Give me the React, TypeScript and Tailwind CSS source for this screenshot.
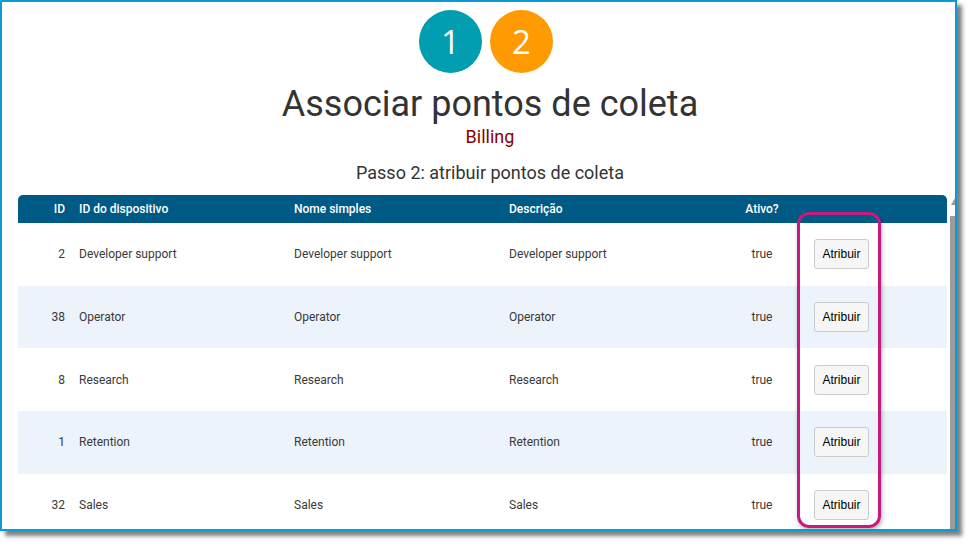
import React from "react";

const rows = [
  { id: 2, name: "Developer support" },
  { id: 38, name: "Operator" },
  { id: 8, name: "Research" },
  { id: 1, name: "Retention" },
  { id: 32, name: "Sales" },
];

export default function App() {
  return (
    <div className="w-[971px] h-[546px] bg-white relative" style={{ fontFamily: "Roboto, 'Liberation Sans', sans-serif" }}>
      <div className="relative w-[957px] h-[531px] border-2 border-[#0a9bd7] bg-white shadow-[5px_5px_4px_rgba(0,0,0,0.5)] overflow-hidden flex">
        <div className="flex-1 flex flex-col">
          <div className="flex flex-col items-center pl-[28px]">
            <div className="flex gap-2 pr-2 mt-[8px]">
              <div className="w-[63px] h-[63px] rounded-full bg-[#009eb0] text-white flex items-center justify-center text-[33px]" style={{ fontFamily: "'Open Sans', sans-serif" }}>1</div>
              <div className="w-[63px] h-[63px] rounded-full bg-[#ff9b00] text-white flex items-center justify-center text-[33px]" style={{ fontFamily: "'Open Sans', sans-serif" }}>2</div>
            </div>
            <div className="mt-[10px] text-[36px] leading-[42px] text-[#333]">Associar pontos de coleta</div>
            <div className="mt-[1px] text-[18px] leading-[22px] text-[#8b0000]">Billing</div>
            <div className="mt-[14px] text-[18px] leading-[22px] text-[#333]">Passo 2: atribuir pontos de coleta</div>
          </div>
          <div className="mt-[11px] ml-[16px] w-[929px]">
            <div className="h-[28px] bg-[#005a86] rounded-t-[5px] grid grid-cols-[61px_215px_215px_223px_60px_1fr] items-center text-white text-[12px] font-medium">
              <div className="text-right pr-[14px]">ID</div>
              <div>ID do dispositivo</div>
              <div>Nome simples</div>
              <div>Descrição</div>
              <div className="text-center">Ativo?</div>
              <div></div>
            </div>
            {rows.map((r, i) => (
              <div key={r.id} className={`h-[62.7px] grid grid-cols-[61px_215px_215px_223px_60px_1fr] items-center text-[12px] text-[#3a3a3a] ${i % 2 === 1 ? "bg-[#ecf3fa]" : "bg-white"}`}>
                <div className="text-right pr-[14px]">{r.id}</div>
                <div>{r.name}</div>
                <div>{r.name}</div>
                <div>{r.name}</div>
                <div className="text-center">true</div>
                <div className="pl-[22px]">
                  <button className="h-[30px] w-[55px] bg-[#f6f6f6] border border-[#cccccc] rounded-[3px] text-[12px] text-black" style={{ fontFamily: "'Liberation Sans', Arial, sans-serif" }}>Atribuir</button>
                </div>
              </div>
            ))}
          </div>
        </div>
        <div className="w-[5px] flex flex-col pt-[194px]">
          <svg width="5" height="10" viewBox="0 0 5 10" className="block">
            <polygon points="5,2 5,9 1,9" fill="#9a9a9a" />
          </svg>
          <div className="mt-[10px] flex-1 bg-[#9c9c9c]"></div>
        </div>
        <div className="absolute left-[795px] top-[210px] w-[84px] h-[316px] border-[3px] border-[#c51a80] rounded-[12px] shadow-[1px_2px_4px_rgba(0,0,0,0.3)]"></div>
      </div>
    </div>
  );
}
